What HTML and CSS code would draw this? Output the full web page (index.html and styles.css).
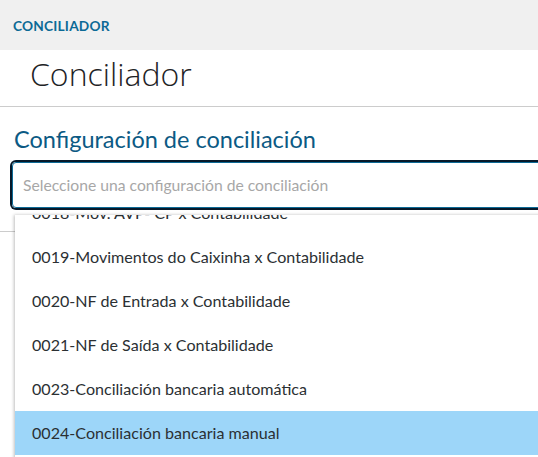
FILE: index.html
```html
<!DOCTYPE html>
<html lang="es">
<head>
<meta charset="utf-8">
<title>Conciliador</title>
<link rel="stylesheet" href="styles.css">
</head>
<body>
<div class="page">
  <div class="topbar"><span class="crumb">CONCILIADOR</span></div>
  <div class="page-title">Conciliador</div>
  <div class="content">
    <div class="label">Configuración de conciliación</div>
    <div class="field">
      <div class="input">Seleccione una configuración de conciliación</div>
      <div class="dropdown">
        <ul class="list">
          <li class="item">0018-Mov. AVP- CP x Contabilidade</li>
          <li class="item">0019-Movimentos do Caixinha x Contabilidade</li>
          <li class="item">0020-NF de Entrada x Contabilidade</li>
          <li class="item">0021-NF de Saída x Contabilidade</li>
          <li class="item">0023-Conciliación bancaria automática</li>
          <li class="item active">0024-Conciliación bancaria manual</li>
        </ul>
      </div>
    </div>
    <div class="divider"></div>
  </div>
</div>
</body>
</html>
```
FILE: styles.css
```css
body {
  margin: 0;
  padding: 0;
  background: #ffffff;
  font-family: "Lato", "Open Sans", "DejaVu Sans", sans-serif;
}
.page {
  height: 100vh;
  overflow: hidden;
}
.topbar {
  height: 50px;
  background: #f0f0f0;
  display: flex;
  align-items: center;
  padding-left: 13px;
}
.crumb {
  font-size: 13.7px;
  font-weight: 700;
  color: #0c6a96;
  letter-spacing: 0.2px;
}
.page-title {
  height: 56px;
  border-bottom: 1px solid #cccccc;
  padding-left: 30px;
  font-family: "Open Sans", "Lato", sans-serif;
  font-size: 32px;
  font-weight: 300;
  color: #1e2326;
  line-height: 47px;
}
.content {
  padding-top: 15px;
}
.label {
  padding-left: 14px;
  font-size: 23.5px;
  color: #0c5a84;
  line-height: 34px;
}
.field {
  position: relative;
  margin-top: 6px;
  margin-left: 12px;
  width: 560px;
}
.input {
  height: 44px;
  border: 1px solid #0c6a96;
  border-radius: 4px;
  box-shadow: 0 0 0 2px #06192a;
  padding-left: 10px;
  font-size: 15.7px;
  color: #a7a7a7;
  line-height: 44px;
  box-sizing: content-box;
}
.dropdown {
  position: absolute;
  top: 53px;
  left: 3px;
  width: 560px;
  height: 245px;
  background: #ffffff;
  overflow: hidden;
  box-shadow: -1px 0 3px rgba(0, 0, 0, 0.25);
  z-index: 2;
}
.list {
  list-style: none;
  margin: -24px 0 0 0;
  padding: 0;
}
.item {
  height: 44px;
  line-height: 44px;
  padding-left: 17px;
  font-size: 16.1px;
  color: #2b3033;
}
.item.active {
  background: #9dd6f9;
}
.divider {
  margin-top: 23px;
  border-top: 1px solid #cccccc;
}
```
